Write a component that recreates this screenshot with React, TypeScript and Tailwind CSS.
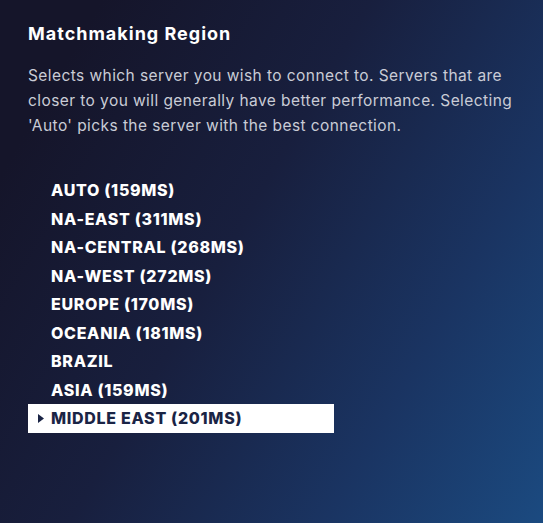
const regions = [
    'AUTO (159MS)',
    'NA-EAST (311MS)',
    'NA-CENTRAL (268MS)',
    'NA-WEST (272MS)',
    'EUROPE (170MS)',
    'OCEANIA (181MS)',
    'BRAZIL',
    'ASIA (159MS)',
    'MIDDLE EAST (201MS)',
];

const App = () => {
    const selected = 8;

    return (
        <div
            className="w-[543px] h-[523px] overflow-hidden bg-[linear-gradient(120deg,#15152a_12%,#181f3e_44%,#1a3462_74%,#1b4a80_100%)] px-7 pt-[23px] font-['Inter',sans-serif]"
        >
            <h1 className="text-[18px] font-bold leading-[22px] text-white tracking-[1px]">
                Matchmaking Region
            </h1>
            <p className="mt-[18px] text-[15.5px] leading-[25px] text-[#c9ccd6] tracking-[0.42px]">
                Selects which server you wish to connect to. Servers that are closer to you will generally have better performance. Selecting 'Auto' picks the server with the best connection.
            </p>

            <ul className="mt-[38px] flex flex-col w-[306px]">
                {regions.map((r, i) => (
                    <li
                        key={r}
                        className={
                            i === selected
                                ? 'flex items-center h-[28.5px] bg-white text-[#1a2445]'
                                : 'flex items-center h-[28.5px] text-white'
                        }
                    >
                        <span className="w-[23px] flex justify-center pl-[2px]">
                            {i === selected && (
                                <svg width="6" height="9" viewBox="0 0 6 9">
                                    <path d="M0 0 L6 4.5 L0 9 Z" fill="#1a2445" />
                                </svg>
                            )}
                        </span>
                        <span className="text-[16px] font-extrabold tracking-[0.7px]">{r}</span>
                    </li>
                ))}
            </ul>
        </div>
    );
};

export default App;
